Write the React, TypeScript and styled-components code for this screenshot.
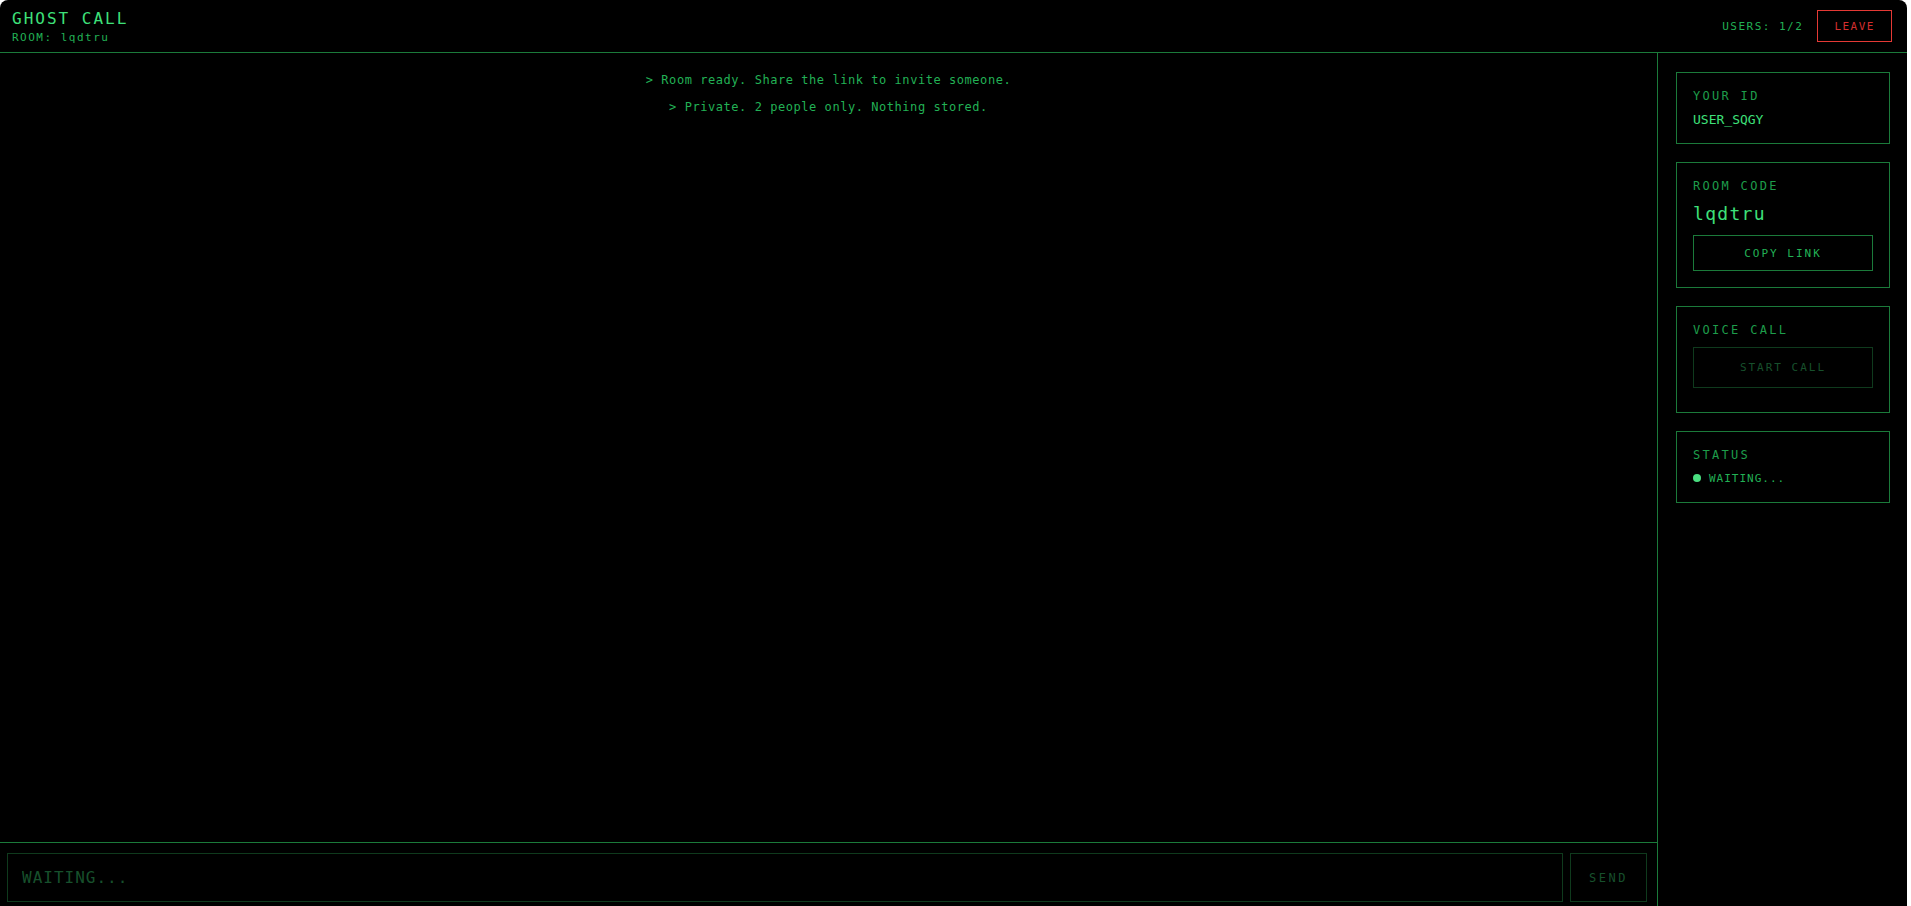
import React from "react";
import styled, { createGlobalStyle } from "styled-components";

const BORDER = "#1b7a3a";
const DIM_BORDER = "#0f3a1d";
const BRIGHT = "#3ee07a";
const TEXT = "#22b155";
const LABEL = "#1e9d4b";
const DIM = "#17502c";
const RED = "#e53935";

const GlobalStyle = createGlobalStyle`
  html, body {
    margin: 0;
    padding: 0;
    height: 100%;
    background: #ffffff;
    overflow: hidden;
  }
  #root {
    height: 100%;
  }
  * {
    box-sizing: border-box;
  }
`;

const Shell = styled.div`
  width: calc(100% - 4px);
  height: 100vh;
  background: #000;
  border-radius: 8px 8px 0 0;
  overflow: hidden;
  display: flex;
  flex-direction: column;
  font-family: "DejaVu Sans Mono", "Liberation Mono", monospace;
  color: ${TEXT};
`;

const Header = styled.header`
  height: 53px;
  flex: none;
  display: flex;
  align-items: center;
  justify-content: space-between;
  padding: 0 15px 0 12px;
  border-bottom: 1px solid ${BORDER};
`;

const Brand = styled.div`
  display: flex;
  flex-direction: column;
  margin-top: 2px;
`;

const Title = styled.div`
  font-size: 16px;
  line-height: 20px;
  letter-spacing: 2px;
  color: ${BRIGHT};
  margin-bottom: 2px;
`;

const RoomLine = styled.div`
  font-size: 11px;
  line-height: 14px;
  letter-spacing: 1.5px;
  color: ${TEXT};
`;

const HeaderRight = styled.div`
  display: flex;
  align-items: center;
  gap: 14px;
`;

const Users = styled.span`
  font-size: 11px;
  letter-spacing: 1.5px;
  color: ${TEXT};
`;

const LeaveButton = styled.button`
  height: 32px;
  padding: 0 16px;
  background: transparent;
  border: 1px solid ${RED};
  color: #d32f2f;
  font-family: inherit;
  font-size: 11px;
  letter-spacing: 1.5px;
  cursor: pointer;
`;

const Main = styled.div`
  flex: 1;
  min-height: 0;
  display: flex;
`;

const ChatPane = styled.section`
  flex: 1;
  display: flex;
  flex-direction: column;
  min-width: 0;
`;

const Log = styled.div`
  flex: 1;
  padding-top: 18px;
  text-align: center;
`;

const LogLine = styled.div`
  font-size: 12px;
  line-height: 19px;
  letter-spacing: 0.55px;
  color: ${TEXT};
  margin-bottom: 8px;
`;

const InputBar = styled.form`
  flex: none;
  display: flex;
  gap: 7px;
  padding: 10px 10px 4px 7px;
  border-top: 1px solid ${BORDER};
`;

const MessageInput = styled.input`
  flex: 1;
  height: 49px;
  padding: 0 14px;
  background: transparent;
  border: 1px solid ${DIM_BORDER};
  outline: none;
  color: ${TEXT};
  font-family: inherit;
  font-size: 16px;
  letter-spacing: 1px;

  &::placeholder {
    color: ${DIM};
  }
`;

const SendButton = styled.button`
  width: 77px;
  height: 49px;
  background: transparent;
  border: 1px solid ${DIM_BORDER};
  color: ${DIM};
  font-family: inherit;
  font-size: 12px;
  letter-spacing: 2.5px;
`;

const Sidebar = styled.aside`
  width: 250px;
  flex: none;
  border-left: 1px solid ${BORDER};
  padding: 19px 17px 18px 18px;
  display: flex;
  flex-direction: column;
  gap: 18px;
`;

const Card = styled.div`
  border: 1px solid ${BORDER};
  padding: 16px;
`;

const Label = styled.div<{ $gap: number }>`
  font-size: 12px;
  line-height: 14px;
  letter-spacing: 2.3px;
  color: ${LABEL};
  margin-bottom: ${(p) => p.$gap}px;
`;

const Value = styled.div`
  font-size: 13px;
  line-height: 14px;
  color: ${BRIGHT};
`;

const Code = styled.div`
  font-size: 18px;
  line-height: 24px;
  letter-spacing: 1.3px;
  color: ${BRIGHT};
  margin-bottom: 9px;
`;

const PanelButton = styled.button<{ $muted?: boolean }>`
  display: block;
  width: 100%;
  height: ${(p) => (p.$muted ? 41 : 36)}px;
  margin-bottom: ${(p) => (p.$muted ? 8 : 0)}px;
  background: transparent;
  border: 1px solid ${(p) => (p.$muted ? DIM_BORDER : BORDER)};
  color: ${(p) => (p.$muted ? DIM : TEXT)};
  font-family: inherit;
  font-size: 11px;
  letter-spacing: 2px;
  cursor: ${(p) => (p.$muted ? "default" : "pointer")};
`;

const StatusRow = styled.div`
  display: flex;
  align-items: center;
  gap: 8px;
  height: 16px;
  font-size: 11px;
  letter-spacing: 1px;
  color: ${TEXT};
`;

const Dot = styled.span`
  width: 8px;
  height: 8px;
  border-radius: 50%;
  background: #4ade80;
`;

const messages = [
  "> Room ready. Share the link to invite someone.",
  "> Private. 2 people only. Nothing stored.",
];

const App = () => {
  const room = "lqdtru";

  return (
    <>
      <GlobalStyle />
      <Shell>
        <Header>
          <Brand>
            <Title>GHOST CALL</Title>
            <RoomLine>ROOM: {room}</RoomLine>
          </Brand>
          <HeaderRight>
            <Users>USERS: 1/2</Users>
            <LeaveButton>LEAVE</LeaveButton>
          </HeaderRight>
        </Header>
        <Main>
          <ChatPane>
            <Log>
              {messages.map((m) => (
                <LogLine key={m}>{m}</LogLine>
              ))}
            </Log>
            <InputBar onSubmit={(e) => e.preventDefault()}>
              <MessageInput placeholder="WAITING..." disabled />
              <SendButton type="submit" disabled>
                SEND
              </SendButton>
            </InputBar>
          </ChatPane>
          <Sidebar>
            <Card>
              <Label $gap={10}>YOUR ID</Label>
              <Value>USER_SQGY</Value>
            </Card>
            <Card>
              <Label $gap={9}>ROOM CODE</Label>
              <Code>{room}</Code>
              <PanelButton>COPY LINK</PanelButton>
            </Card>
            <Card>
              <Label $gap={10}>VOICE CALL</Label>
              <PanelButton $muted disabled>
                START CALL
              </PanelButton>
            </Card>
            <Card>
              <Label $gap={8}>STATUS</Label>
              <StatusRow>
                <Dot />
                WAITING...
              </StatusRow>
            </Card>
          </Sidebar>
        </Main>
      </Shell>
    </>
  );
};

export default App;
